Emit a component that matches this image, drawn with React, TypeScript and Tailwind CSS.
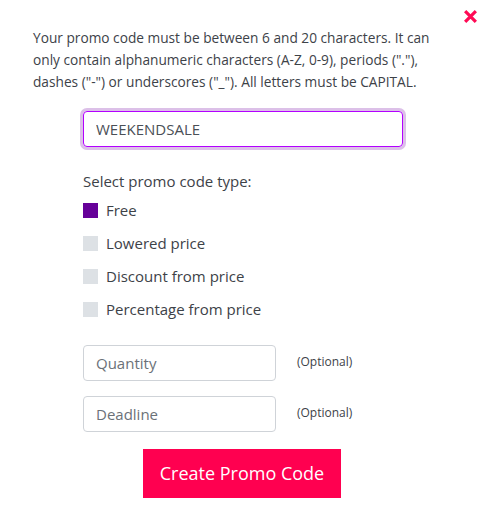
import { useState } from 'react';

const TYPES = ['Free', 'Lowered price', 'Discount from price', 'Percentage from price'];

export default function App() {
  const [type, setType] = useState('Free');
  const [code, setCode] = useState('WEEKENDSALE');

  return (
    <div className="relative w-[486px] h-[508px] bg-white text-[#3d4248]" style={{ fontFamily: '"Open Sans", sans-serif' }}>
      <button className="absolute right-[8px] top-[8px] w-[16px] h-[16px] flex items-center justify-center">
        <svg width="15" height="15" viewBox="0 0 14 14">
          <path d="M2 2 L12 12 M12 2 L2 12" stroke="#ff0a55" strokeWidth="3" strokeLinecap="butt" />
        </svg>
      </button>

      <div className="pt-[27px] pl-[33px] pr-[30px]">
        <p className="text-[13.7px] leading-[22px] text-[#3d4248]">
          Your promo code must be between 6 and 20 characters. It can only contain alphanumeric characters (A-Z, 0-9), periods ("."), dashes ("-") or underscores ("_"). All letters must be CAPITAL.
        </p>
      </div>

      <div className="pl-[83px] pt-[18px]">
        <input
          value={code}
          onChange={e => setCode(e.target.value)}
          className="w-[320px] h-[36px] px-[12px] rounded-[4px] border border-[#b300ff] ring-[3px] ring-[#dcc0e8] text-[15px] text-[#4a4f56] outline-none"
        />

        <p className="mt-[24px] text-[15px] leading-[20px] text-[#3d4248]">Select promo code type:</p>

        <div className="mt-[9px] flex flex-col gap-[13px]">
          {TYPES.map(t => (
            <label key={t} className="flex items-center gap-[8px] h-[20px] cursor-pointer" onClick={() => setType(t)}>
              <span className={`w-[15px] h-[15px] ${type === t ? 'bg-[#660099]' : 'bg-[#dde1e5]'}`} />
              <span className="text-[15px] text-[#3d4248]">{t}</span>
            </label>
          ))}
        </div>

        <div className="mt-[26px] flex flex-col gap-[15px]">
          {['Quantity', 'Deadline'].map(p => (
            <div key={p} className="flex items-center">
              <input
                placeholder={p}
                className="w-[193px] h-[36px] px-[12px] rounded-[4px] border border-[#cfd3d8] text-[15px] text-[#4a4f56] placeholder:text-[#6b7178] outline-none"
              />
              <span className="ml-[21px] mb-[3px] text-[12px] text-[#3d4248]">(Optional)</span>
            </div>
          ))}
        </div>
      </div>

      <div className="flex justify-center pt-[17px] pr-[2px]">
        <button className="w-[198px] h-[49px] bg-[#ff0050] text-white text-[18px]">Create Promo Code</button>
      </div>
    </div>
  );
}
